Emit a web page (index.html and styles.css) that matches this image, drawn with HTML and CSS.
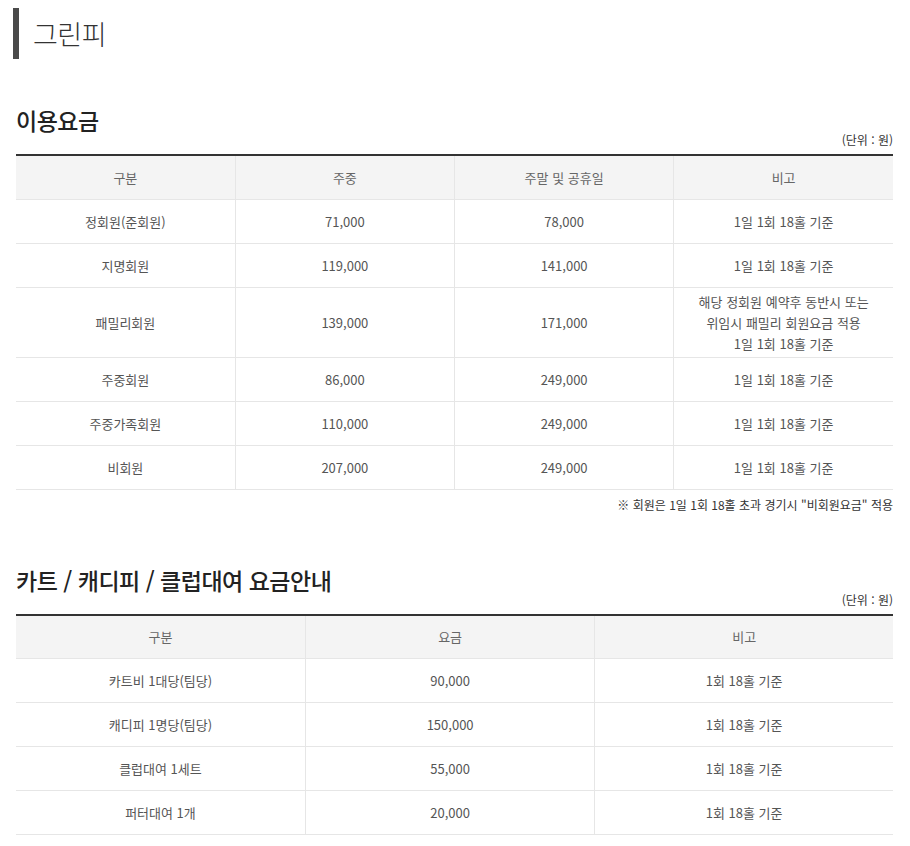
FILE: index.html
```html
<!DOCTYPE html>
<html lang="ko">
<head>
<meta charset="utf-8">
<title>그린피</title>
<link rel="stylesheet" href="styles.css">
</head>
<body>
<div class="page">
  <h2 class="page-title">그린피</h2>

  <section class="fee-section first">
    <h3 class="sec-title">이용요금</h3>
    <p class="unit">(단위 : 원)</p>
    <table class="fee-table cols-4">
      <thead>
        <tr><th>구분</th><th>주중</th><th>주말 및 공휴일</th><th>비고</th></tr>
      </thead>
      <tbody>
        <tr><td>정회원(준회원)</td><td>71,000</td><td>78,000</td><td>1일 1회 18홀 기준</td></tr>
        <tr><td>지명회원</td><td>119,000</td><td>141,000</td><td>1일 1회 18홀 기준</td></tr>
        <tr><td>패밀리회원</td><td>139,000</td><td>171,000</td><td>해당 정회원 예약후 동반시 또는<br>위임시 패밀리 회원요금 적용<br>1일 1회 18홀 기준</td></tr>
        <tr><td>주중회원</td><td>86,000</td><td>249,000</td><td>1일 1회 18홀 기준</td></tr>
        <tr><td>주중가족회원</td><td>110,000</td><td>249,000</td><td>1일 1회 18홀 기준</td></tr>
        <tr><td>비회원</td><td>207,000</td><td>249,000</td><td>1일 1회 18홀 기준</td></tr>
      </tbody>
    </table>
    <p class="note">※ 회원은 1일 1회 18홀 초과 경기시 "비회원요금" 적용</p>
  </section>

  <section class="fee-section second">
    <h3 class="sec-title">카트 / 캐디피 / 클럽대여 요금안내</h3>
    <p class="unit">(단위 : 원)</p>
    <table class="fee-table cols-3">
      <colgroup><col class="c33"><col class="c33"><col></colgroup>
      <thead>
        <tr><th>구분</th><th>요금</th><th>비고</th></tr>
      </thead>
      <tbody>
        <tr><td>카트비 1대당(팀당)</td><td>90,000</td><td>1회 18홀 기준</td></tr>
        <tr><td>캐디피 1명당(팀당)</td><td>150,000</td><td>1회 18홀 기준</td></tr>
        <tr><td>클럽대여 1세트</td><td>55,000</td><td>1회 18홀 기준</td></tr>
        <tr><td>퍼터대여 1개</td><td>20,000</td><td>1회 18홀 기준</td></tr>
      </tbody>
    </table>
  </section>
</div>
</body>
</html>
```

FILE: styles.css
```css
* { box-sizing: border-box; }
html, body { margin: 0; padding: 0; background: #fff; }
body {
  font-family: "Noto Sans CJK KR", "Noto Sans", sans-serif;
  color: #333;
}
.page {
  padding: 8px 17px 0 16px;
}
.page-title {
  margin: 0 0 0 -3px;
  height: 51px;
  border-left: 6px solid #4a4a4a;
  padding-left: 14px;
  display: flex;
  align-items: center;
  font-size: 27px;
  font-weight: 300;
  color: #333;
  letter-spacing: -0.5px;
}
.fee-section.first { margin-top: 49px; }
.fee-section.second { margin-top: 54px; }
.sec-title {
  margin: 0;
  font-size: 23px;
  line-height: 24px;
  font-weight: 500;
  color: #222;
  letter-spacing: -0.5px;
}
.unit {
  margin: 0;
  text-align: right;
  font-size: 12px;
  line-height: 16px;
  color: #333;
}
.fee-table {
  width: 100%;
  margin-top: 6px;
  border-collapse: collapse;
  table-layout: fixed;
  border-top: 2px solid #333;
  font-size: 13px;
}
.fee-table col.c33 { width: 33%; }
.fee-table th,
.fee-table td {
  height: 44px;
  padding: 3px 10px;
  text-align: center;
  vertical-align: middle;
  line-height: 21px;
  border-bottom: 1px solid #e6e6e6;
  border-left: 1px solid #e6e6e6;
}
.fee-table th:first-child,
.fee-table td:first-child { border-left: 0; }
.fee-table th {
  background: #f4f4f4;
  font-weight: 400;
  color: #666;
}
.fee-table td { color: #555; }
.note {
  margin: 6px 0 0;
  text-align: right;
  font-size: 12px;
  line-height: 18px;
  color: #333;
}
```
